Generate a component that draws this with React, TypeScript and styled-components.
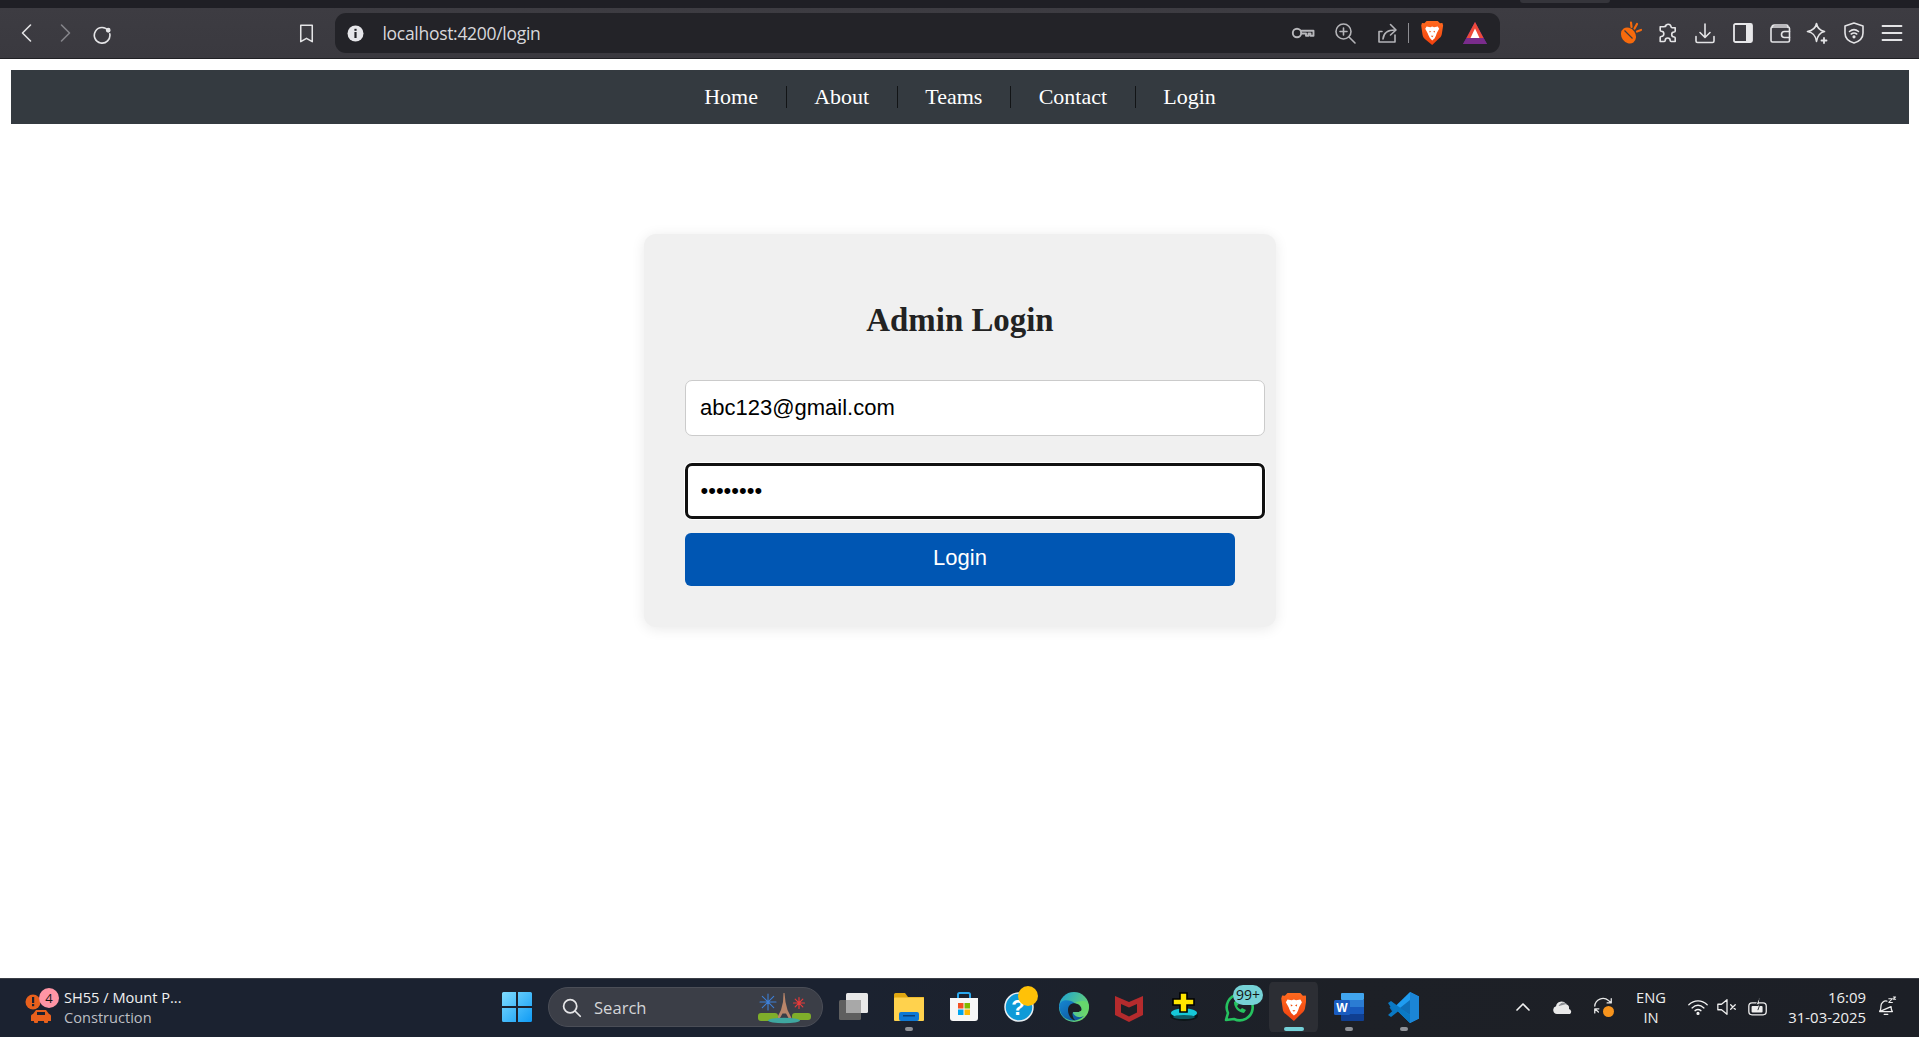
import React from "react";
import styled, { createGlobalStyle } from "styled-components";

const Global = createGlobalStyle`
  html, body { margin: 0; padding: 0; height: 100%; background: #fff; }
  #root { height: 100%; }
  * { box-sizing: border-box; }
`;

const Shell = styled.div`
  height: 1037px; display: flex; flex-direction: column; overflow: hidden;
`;
const TopStrip = styled.div`
  height: 8px; background: #1f1f25; flex: none; position: relative;
`;
const StripTab = styled.div`
  position: absolute; left: 1520px; top: 0; width: 90px; height: 3px;
  background: #35353b; border-radius: 0 0 6px 6px;
`;
const Toolbar = styled.header`
  height: 51px; flex: none; display: flex; align-items: center; padding: 0 0 0 8px;
  background: linear-gradient(180deg, #3d3c42 0%, #3a393f 100%);
  border-bottom: 1px solid #202024;
`;
const Slot = styled.span<{ $w: number; $ml?: number; $op?: number }>`
  flex: none; display: flex; align-items: center; justify-content: center; position: relative;
  width: ${(p) => p.$w}px; margin-left: ${(p) => p.$ml ?? 0}px; opacity: ${(p) => p.$op ?? 1};
`;
const AddressBar = styled.div`
  flex: none; width: 1165px; height: 40px; margin-left: 10px;
  display: flex; align-items: center; padding: 0 7.5px 0 12px;
  background: #232328; border-radius: 11px;
`;
const Url = styled.span`
  font-family: "Open Sans", sans-serif; font-size: 17.5px; letter-spacing: -0.3px; color: #d8d8dc;
  margin-left: 18.5px; flex: 1; white-space: nowrap; line-height: 22px; margin-top: -1px;
`;
const UrlDivider = styled.span`
  width: 1px; height: 20px; background: #8d8d92; flex: none;
`;
const RightTools = styled.div`
  display: flex; align-items: center; margin-left: 112px;
`;

const Page = styled.main`
  flex: 1; min-height: 0; background: #fff; padding: 11px 10px 0 11px; display: flex; flex-direction: column;
`;
const NavBar = styled.nav`
  height: 54px; flex: none; background: #343a40; display: flex; align-items: center; justify-content: center;
`;
const NavLink = styled.a<{ $last?: boolean }>`
  font-family: "Liberation Serif", serif; font-size: 22px; color: #fff; line-height: 22px;
  padding: 0 27.6px; text-decoration: none;
  border-right: ${(p) => (p.$last ? "none" : "1px solid #121416")};
  height: 22px; display: block;
`;
const Card = styled.section`
  width: 632px; height: 393px; margin: 110px auto 0; flex: none; background: #f0f0f0;
  border-radius: 12px; box-shadow: 0 2px 14px rgba(0, 0, 0, 0.09);
  padding: 0 10px 0 41px; display: flex; flex-direction: column; align-items: flex-start;
`;
const Title = styled.h2`
  width: 550px; margin: 66px 0 0; height: 40px; line-height: 40px; text-align: center;
  font-family: "Liberation Serif", serif; font-weight: 700; font-size: 32.9px; color: #222;
`;
const Field = styled.input<{ $focused?: boolean }>`
  width: 580px; height: 56px; margin: ${(p) => (p.$focused ? "27px" : "40px")} 0 0;
  padding: 0 ${(p) => (p.$focused ? 12.5 : 14)}px;
  font-family: "Liberation Sans", sans-serif; font-size: 22px; color: #000; background: #fff;
  border-radius: 7px; appearance: none; display: block;
  border: ${(p) => (p.$focused ? "3px solid #111" : "1px solid #cbcbcb")};
  box-shadow: ${(p) => (p.$focused ? "0 0 0 1px #fff" : "none")};
  outline: none;
`;
const LoginButton = styled.button`
  width: 550px; height: 53px; margin-top: 14px; border: none; border-radius: 6px; padding: 0 0 3px;
  background: #0056b3; color: #fff; font-family: "Liberation Sans", sans-serif; font-size: 22px;
`;

const Taskbar = styled.footer`
  height: 59px; flex: none; display: flex; align-items: center;
  background: linear-gradient(90deg, #1b2230 0%, #1b2230 45%, #1d2026 70%, #1c1f26 100%);
  border-top: 1px solid #3a3e46;
`;
const Weather = styled.div`
  width: 490px; flex: none; display: flex; align-items: center; padding-left: 24px;
`;
const WeatherIcon = styled.span`
  position: relative; width: 40px; height: 40px; flex: none; display: block;
`;
const Badge = styled.span<{ $bg: string; $l: number; $t: number; $w: number; $h: number; $fs: number }>`
  position: absolute; left: ${(p) => p.$l}px; top: ${(p) => p.$t}px; width: ${(p) => p.$w}px; height: ${(p) => p.$h}px;
  border-radius: 12px; background: ${(p) => p.$bg}; color: #151515; display: flex; align-items: center; justify-content: center;
  font-family: "Open Sans", sans-serif; font-size: ${(p) => p.$fs}px; line-height: 1;
`;
const WeatherText = styled.div`
  display: flex; flex-direction: column; font-family: "Open Sans", sans-serif; font-size: 14.6px; line-height: 20px;
  margin-top: -2px;
`;
const WeatherTitle = styled.span`color: #f1f1f1; white-space: nowrap;`;
const WeatherSub = styled.span`color: #bdbfc3;`;
const SearchBox = styled.div`
  width: 275px; height: 40px; flex: none; margin-left: 4px; margin-right: 3px; border-radius: 20px;
  background: #3b3e47; border: 1px solid #4b4e57; margin-top: -2px;
  display: flex; align-items: center; padding-left: 12px; position: relative;
`;
const SearchLabel = styled.span`
  font-family: "Open Sans", sans-serif; font-size: 16.6px; color: #d4d5d8; margin-left: 12px;
`;
const SearchArt = styled.span`
  position: absolute; right: 10px; top: 4px; display: block; height: 32px;
`;
const TaskSlot = styled.span<{ $active?: boolean }>`
  flex: none; width: 55px; height: 50px; display: flex; align-items: center; justify-content: center; position: relative;
  padding: 0 3px; margin-top: -2px; border-radius: 6px; background-clip: content-box;
  background-color: ${(p) => (p.$active ? "#2c2e34" : "transparent")};
`;
const RunDot = styled.span<{ $active?: boolean }>`
  position: absolute; bottom: 1px; left: 50%; transform: translateX(-50%); height: 4px; border-radius: 2px;
  width: ${(p) => (p.$active ? 20 : 8)}px; background: ${(p) => (p.$active ? "#74d1d8" : "#8e9197")};
`;
const Tray = styled.div`
  display: flex; align-items: center; margin-left: 72px; margin-top: -2px; font-family: "Open Sans", sans-serif; color: #eee;
`;
const Lang = styled.span`
  flex: none; width: 56px; text-align: center; font-size: 14.7px; line-height: 20px;
`;
const Clock = styled.span`
  flex: none; width: 91px; text-align: right; font-size: 14.9px; line-height: 20px; white-space: nowrap;
`;

const Stroke = { fill: "none", stroke: "currentColor", strokeLinecap: "round" as const, strokeLinejoin: "round" as const };

const Ico: React.FC<{ s?: number; w?: number; h?: number; vb?: string; c?: string; sw?: number; children: React.ReactNode }> = ({ s = 22, w, h, vb = "0 0 24 24", c = "#e4e4e6", sw = 1.6, children }) => (
  <svg width={w ?? s} height={h ?? s} viewBox={vb} style={{ color: c, display: "block" }} strokeWidth={sw} {...Stroke}>
    {children}
  </svg>
);

const BraveShield = ({ s = 24, id }: { s?: number; id: string }) => (
  <svg width={s * 0.86} height={s} viewBox="0 0 24 28" style={{ display: "block" }}>
    <defs>
      <linearGradient id={id} x1="0" y1="0" x2="0" y2="1"><stop offset="0" stopColor="#ff6a1f" /><stop offset="1" stopColor="#f0400e" /></linearGradient>
    </defs>
    <path d="M6 1h12l2.400 2.600 2.600-.4.800 2.800-1.400 9c-.3 2-1.200 3.400-2.800 4.600L12 27l-7.600-6.400C2.800 19.400 1.900 18 1.600 16L.2 6l.8-2.800 2.600.4z" fill={`url(#${id})`} />
    <path d="M6 7l4 .8L12 7l2 .8 4-.8 1.500 2.500-2.500 4.500-1 3-1.500 3L12 22l-2.500-2.500L8 16.500l-1-2.500L4.500 9.500z" fill="#fff" />
    <path d="M9 11.500l2 1.200-1.800.8zM15 11.500l-2 1.200 1.800.8zM10.500 17h3l-1.500 1.500z" fill="#f0500f" />
  </svg>
);

const Bat = () => (
  <svg width="24" height="22" viewBox="0 0 24 22" style={{ display: "block" }}>
    <path d="M12 0 L24 22 H0z" fill="#6b2a8e" />
    <path d="M12 0 L20.500 16 H3.500z" fill="#ee4a3a" />
    <path d="M12 6.500 L16.500 16 H7.500z" fill="#fff" />
    <path d="M3.500 16h17L24 22H0z" fill="#7a2c8c" />
  </svg>
);

export default function App() {
  return (
    <Shell>
      <Global />
      <TopStrip><StripTab /></TopStrip>
      <Toolbar>
        <Slot $w={38}><Ico s={24}><path d="M15.500 4l-8 8 8 8" /></Ico></Slot>
        <Slot $w={38}><Ico s={24} c="#85858a"><path d="M8.500 4l8 8-8 8" /></Ico></Slot>
        <Slot $w={36}><Ico s={22} sw={1.800}><path d="M19 9.500A8.500 8.500 0 1 0 20.500 13" /><circle cx="18.800" cy="9" r="1.700" fill="currentColor" /></Ico></Slot>
        <Slot $w={38} $ml={167}><Ico s={23}><path d="M6 3.500h12v17l-6-3.500-6 3.500z" /></Ico></Slot>
        <AddressBar>
          <svg width="17" height="17" viewBox="0 0 17 17" style={{ display: "block", flex: "none" }}>
            <circle cx="8.500" cy="8.500" r="8" fill="#e6e6ea" />
            <rect x="7.400" y="7" width="2.200" height="6" fill="#232328" />
            <rect x="7.400" y="3.800" width="2.200" height="2" fill="#232328" />
          </svg>
          <Url>localhost:4200/login</Url>
          <Slot $w={42}><Ico w={24} h={20} vb="0 0 24 20" c="#b8b8bc" sw={1.900}><circle cx="6" cy="10" r="4.200" /><path d="M10.500 7.800h12v5h-3v-2.300h-2v2.300h-2.500v-2.300h-4.500" /></Ico></Slot>
          <Slot $w={42}><Ico s={24} c="#b4b4b8"><circle cx="10.500" cy="10.500" r="7.500" /><path d="M16 16l6 6M10.500 7v7M7 10.500h7" /></Ico></Slot>
          <Slot $w={42}><Ico s={24} c="#b4b4b8"><path d="M20 14v7H4V10.500h3" /><path d="M8 18c.5-6 4-9 12-9" /><path d="M15.500 3.500L21 9l-5.500 5" /></Ico></Slot>
          <UrlDivider />
          <Slot $w={48}><BraveShield s={26} id="brvA" /></Slot>
          <Slot $w={36}><Bat /></Slot>
        </AddressBar>
        <RightTools>
          <Slot $w={37.300}>
            <svg width="24" height="24" viewBox="0 0 24 24" style={{ display: "block" }}>
              <ellipse cx="9.500" cy="14.500" rx="7" ry="8.500" transform="rotate(-35 9.500 14.500)" fill="#f76a0c" />
              <path d="M5.500 9.500l8 8" stroke="#3b3a40" strokeWidth="1.100" />
              <path d="M12 1.500l.5 4.500M18 3l-2.500 4.500M22 9l-4 1.500" stroke="#f76a0c" strokeWidth="2.200" strokeLinecap="round" />
            </svg>
          </Slot>
          <Slot $w={37.300}><Ico s={24}><path d="M9.500 5.500a2.800 2.800 0 0 1 5.500 0c0 .8 .5 1.200 1.200 1.200h3v3.300c0 .8 -.5 1 -1 1a2.500 2.500 0 0 0 0 5c.5 0 1 .2 1 1v3.500h-4c-.8 0 -1 -.5 -1 -1a2.500 2.500 0 0 0 -5 0c0 .5 -.2 1 -1 1h-4v-4c0 -.7 .5 -1 1 -1a2.600 2.600 0 0 0 0 -5.300c-.5 0 -1 -.3 -1 -1v-3.500h4c.8 0 1.300 -.4 1.300 -1.200z" /></Ico></Slot>
          <Slot $w={37.300}><Ico s={24}><path d="M12 3v13M7 11.500l5 5 5-5" /><path d="M3 15.500v4.500a1.500 1.500 0 0 0 1.500 1.500h15A1.500 1.500 0 0 0 21 20v-4.500" /></Ico></Slot>
          <Slot $w={37.300}>
            <svg width="20" height="20" viewBox="0 0 20 20" style={{ display: "block" }}>
              <rect x="1" y="1" width="18" height="18" rx="1.500" fill="none" stroke="#e8e8ea" strokeWidth="1.800" />
              <rect x="13" y="1" width="6" height="18" fill="#e8e8ea" />
            </svg>
          </Slot>
          <Slot $w={37.300}><Ico s={24}><path d="M4 6.500c0-1.500 1-2.500 2.500-2.500h12c1 0 1.500 .6 1.500 1.500v1" /><rect x="3" y="6" width="18.500" height="15" rx="1.500" /><path d="M21.500 10.500h-5a2.800 2.800 0 0 0 0 6h5" /></Ico></Slot>
          <Slot $w={37.300}><Ico s={24}><path d="M11.500 2.500c.8 4.500 3.200 7 8 8-4.500 1-7 3.500-8 10-1-6.500-3.500-9-9-10 5.500-1 8.200-3.500 9-8z" /><path d="M19 17v5M16.500 19.500h5" strokeWidth="1.800" /></Ico></Slot>
          <Slot $w={37.300}><Ico s={24}><path d="M12 2l9 3v7c0 5-4 8.500-9 10-5-1.500-9-5-9-10V5z" /><path d="M7.500 10.500c2.700-2.300 6.300-2.300 9 0M9.300 13c1.700-1.200 3.700-1.200 5.400 0" /><circle cx="12" cy="15.800" r=".8" fill="currentColor" /></Ico></Slot>
          <Slot $w={37.300}><Ico s={24} sw={1.800}><path d="M2.500 5h19M2.500 12h19M2.500 19h19" /></Ico></Slot>
        </RightTools>
      </Toolbar>

      <Page>
        <NavBar>
          <NavLink>Home</NavLink>
          <NavLink>About</NavLink>
          <NavLink>Teams</NavLink>
          <NavLink>Contact</NavLink>
          <NavLink $last>Login</NavLink>
        </NavBar>
        <Card>
          <Title>Admin Login</Title>
          <Field type="email" readOnly value="abc123@gmail.com" />
          <Field $focused type="password" readOnly value="12345678" />
          <LoginButton>Login</LoginButton>
        </Card>
      </Page>

      <Taskbar>
        <Weather>
          <WeatherIcon>
            <svg width="32" height="40" viewBox="0 0 32 40" style={{ display: "block" }}>
              <circle cx="9" cy="14" r="7.500" fill="#e8601c" />
              <rect x="8" y="9" width="2.200" height="6" fill="#1b2230" />
              <rect x="8" y="16" width="2.200" height="2.200" fill="#1b2230" />
              <path d="M7 33v-5c0-1 1-2 2-2l3-4h10l3 4c1 0 2 1 2 2v5z" fill="#e8601c" />
              <rect x="13" y="24" width="8" height="3" fill="#1b2230" />
              <rect x="10" y="32" width="4" height="3" rx="1" fill="#e8601c" />
              <rect x="20" y="32" width="4" height="3" rx="1" fill="#e8601c" />
            </svg>
            <Badge $bg="#ff95a5" $l={15} $t={0} $w={20} $h={20} $fs={13}>4</Badge>
          </WeatherIcon>
          <WeatherText>
            <WeatherTitle>SH55 / Mount P...</WeatherTitle>
            <WeatherSub>Construction</WeatherSub>
          </WeatherText>
        </Weather>
        <Slot $w={54}>
          <svg width="30" height="30" viewBox="0 0 30 30" style={{ display: "block", marginTop: -2 }}>
            <defs>
              <linearGradient id="win" x1="0" y1="0" x2="1" y2="1"><stop offset="0" stopColor="#7fdcff" /><stop offset="1" stopColor="#0f9bf5" /></linearGradient>
            </defs>
            <path d="M1.500 0H14V14H0V1.500A1.500 1.500 0 0 1 1.500 0zM16 0h12.500A1.500 1.500 0 0 1 30 1.500V14H16zM0 16h14v14H1.500A1.500 1.500 0 0 1 0 28.500zM16 16h14v12.500a1.500 1.500 0 0 1-1.500 1.500H16z" fill="url(#win)" />
          </svg>
        </Slot>
        <SearchBox>
          <Ico s={21} c="#e6e6e8" sw={2}><circle cx="10.500" cy="10.500" r="7.500" /><path d="M16 16l6 6" /></Ico>
          <SearchLabel>Search</SearchLabel>
          <SearchArt>
            <svg width="54" height="32" viewBox="0 0 54 32" style={{ display: "block" }}>
              <g stroke="#3d7fd6" strokeWidth="1.100" strokeLinecap="round">
                <path d="M10 2v16M2 10h16M4.300 4.300l11.400 11.400M15.700 4.300L4.300 15.700" />
              </g>
              <g stroke="#e83a3a" strokeWidth="1.200" strokeLinecap="round">
                <path d="M41 5.500v11M35.500 11h11M37.200 7.200l7.600 7.600M44.800 7.200l-7.600 7.600" />
              </g>
              <path d="M25.500 1h1l1 9 2 8 4 8h-3l-2.500-4.500h-3.500L22 26h-3l4-8 2-8z" fill="#b8856a" />
              <rect x="0" y="21" width="20" height="8" rx="3" fill="#7fae2a" />
              <rect x="34" y="21" width="19" height="7" rx="3" fill="#7fae2a" />
              <ellipse cx="26" cy="28.500" rx="16" ry="2.800" fill="#3fa7a0" />
            </svg>
          </SearchArt>
        </SearchBox>
        <TaskSlot>
          <svg width="30" height="30" viewBox="0 0 30 30" style={{ display: "block" }}>
            <rect x="0" y="8" width="22" height="20" rx="1.500" fill="#5f5f5f" />
            <rect x="7" y="1" width="22" height="20" rx="1.500" fill="#e9e9e9" />
            <rect x="7" y="8" width="15" height="13" fill="#a8a8a8" />
          </svg>
        </TaskSlot>
        <TaskSlot>
          <svg width="30" height="28" viewBox="0 0 30 28" style={{ display: "block" }}>
            <path d="M0 1.500A1.500 1.500 0 0 1 1.500 0H11l3 4h16v6H0z" fill="#e0a711" />
            <rect x="0" y="4.500" width="30" height="23.500" rx="1" fill="#ffd24d" />
            <rect x="5" y="19" width="20" height="9" rx="2" fill="#0f78d4" />
            <rect x="9" y="22" width="12" height="1.500" fill="#0b3f78" />
          </svg>
          <RunDot />
        </TaskSlot>
        <TaskSlot>
          <svg width="30" height="30" viewBox="0 0 30 30" style={{ display: "block" }}>
            <path d="M9 6V2.500A1.500 1.500 0 0 1 10.500 1h9A1.500 1.500 0 0 1 21 2.500V6" fill="none" stroke="#2aa8ee" strokeWidth="2" />
            <path d="M1 6h28v20a3 3 0 0 1-3 3H4a3 3 0 0 1-3-3z" fill="#f7f7f7" />
            <rect x="9" y="11" width="5.500" height="5.500" fill="#f25022" />
            <rect x="15.500" y="11" width="5.500" height="5.500" fill="#7fba00" />
            <rect x="9" y="17.500" width="5.500" height="5.500" fill="#00a4ef" />
            <rect x="15.500" y="17.500" width="5.500" height="5.500" fill="#ffb900" />
          </svg>
        </TaskSlot>
        <TaskSlot>
          <svg width="30" height="30" viewBox="0 0 30 30" style={{ display: "block" }}>
            <circle cx="15" cy="15" r="14" fill="#0e9ad7" stroke="#e8eef2" strokeWidth="1.500" />
            <text x="14" y="23" textAnchor="middle" fontFamily="Liberation Sans, sans-serif" fontWeight="700" fontSize="22" fill="#fff">?</text>
          </svg>
          <Badge $bg="#ffc107" $l={27} $t={4} $w={20} $h={20} $fs={1} />
        </TaskSlot>
        <TaskSlot>
          <svg width="30" height="30" viewBox="0 0 30 30" style={{ display: "block" }}>
            <defs>
              <linearGradient id="edgeA" x1="0" y1="0" x2="1" y2=".6"><stop offset="0" stopColor="#1aa0d8" /><stop offset="1" stopColor="#6fd86a" /></linearGradient>
              <linearGradient id="edgeB" x1="0" y1="0" x2="1" y2="1"><stop offset="0" stopColor="#1688d4" /><stop offset="1" stopColor="#0c4d90" /></linearGradient>
            </defs>
            <circle cx="15" cy="15" r="15" fill="url(#edgeA)" />
            <path d="M0 15C1 7 8 8 12 9c5 1.500 7 6 3 8-3.500 1.500-.5 7 4.500 8 2 .4 4-.2 5.500-1.200-7 8-24 6-24.500-8.800z" fill="url(#edgeB)" />
            <path d="M9 18c0-5 4-7.500 8-6.500 4 1 5.500 4 5.500 6 0 2-2 2.500-4 2.500h-4c-2 1-1 6 2 8.500C12 28 9 23 9 18z" fill="#1b1e25" />
            <path d="M30 15c0 3-3 5.500-7 5.500-2 0-3-.8-3-1 2 .2 3.500-.8 3.300-2.500C23 14 20 11 16 11 21 8 30 8 30 15z" fill="#66d66c" />
          </svg>
        </TaskSlot>
        <TaskSlot>
          <svg width="28" height="30" viewBox="0 0 28 30" style={{ display: "block" }}>
            <path d="M0 4l14 6 14-6v19L14 30 0 23z" fill="#b52b2d" />
            <path d="M6 12l8 3.500L22 12v8.500l-8 4-8-4z" fill="#1d2026" />
          </svg>
        </TaskSlot>
        <TaskSlot>
          <svg width="30" height="30" viewBox="0 0 30 30" style={{ display: "block" }}>
            <ellipse cx="15" cy="24" rx="14" ry="5" fill="#0d1518" />
            <ellipse cx="15" cy="21" rx="13" ry="4.500" fill="#16c8d8" />
            <ellipse cx="15" cy="25" rx="11" ry="2" fill="#0d5c66" />
            <path d="M11 1h7v6h7v6h-7v7h-7v-7H4V7h7z" fill="#ffe600" stroke="#000" strokeWidth="1.600" />
          </svg>
        </TaskSlot>
        <TaskSlot>
          <svg width="32" height="32" viewBox="0 0 32 32" style={{ display: "block" }}>
            <path d="M3 29l2-7A13 13 0 1 1 11 28z" fill="none" stroke="#25c25f" strokeWidth="2.600" strokeLinejoin="round" />
            <path d="M11 11c0 6 4 10 10 11l2-3-4-2-1.500 1.500c-1.500-.8-2.800-2-3.500-3.500L15.500 13.500 13.500 9.500z" fill="#25c25f" />
          </svg>
          <Badge $bg="#76d2d6" $l={22} $t={3} $w={30} $h={20} $fs={14}>99+</Badge>
        </TaskSlot>
        <TaskSlot $active>
          <BraveShield s={30} id="brvB" />
          <RunDot $active />
        </TaskSlot>
        <TaskSlot>
          <svg width="30" height="28" viewBox="0 0 30 28" style={{ display: "block" }}>
            <rect x="7" y="0" width="23" height="7" rx="1" fill="#41a5ee" />
            <rect x="7" y="7" width="23" height="7" fill="#2b7cd3" />
            <rect x="7" y="14" width="23" height="7" fill="#185abd" />
            <rect x="7" y="21" width="23" height="7" rx="1" fill="#103f91" />
            <rect x="0" y="7" width="16" height="15" rx="1.500" fill="#1a5cc0" />
            <text x="8" y="19" textAnchor="middle" fontFamily="Liberation Sans, sans-serif" fontWeight="700" fontSize="12" fill="#fff">W</text>
          </svg>
          <RunDot />
        </TaskSlot>
        <TaskSlot>
          <svg width="31" height="31" viewBox="0 0 31 31" style={{ display: "block" }}>
            <path d="M22 0l9 4.500v22L22 31 6 15.500z" fill="#1f9cf0" />
            <path d="M22 0v31l9-4.500v-22z" fill="#1b85d6" />
            <path d="M22 8L10 17.500 4.500 13 1.500 15.500 4.500 20l6-4.500L22 23z" fill="#0f6fb8" />
            <path d="M0 11l3-2 19 14v8l-12-11.500-7 5.500-3-2 5-4.500z" fill="#0a79c4" />
          </svg>
          <RunDot />
        </TaskSlot>
        <Tray>
          <Slot $w={40}><Ico s={18} c="#f0f0f0" sw={2.200}><path d="M4 16l8-8 8 8" /></Ico></Slot>
          <Slot $w={40}>
            <svg width="20" height="14" viewBox="0 0 20 14" style={{ display: "block" }}>
              <path d="M4 14a4 4 0 0 1-1-7.800A5.500 5.500 0 0 1 13 4a4.500 4.500 0 0 1 3 5 2.800 2.800 0 0 1 1 5z" fill="#e8e8e8" />
              <path d="M6 6a5 5 0 0 1 7.500-2" fill="#8a8d92" stroke="#8a8d92" />
            </svg>
          </Slot>
          <Slot $w={40}>
            <Ico s={22} c="#e8e8e8" sw={1.400}><path d="M3 11a9 9 0 0 1 15-6l3 2.500M21 3v4.500h-4.500" /><path d="M3 14l4 3.500M3 18.500V14h4.500" /></Ico>
            <Badge $bg="#f7941d" $l={20} $t={10} $w={11} $h={11} $fs={1} />
          </Slot>
          <Lang>ENG<br />IN</Lang>
          <Slot $w={30} $ml={4}><Ico s={22} c="#f2f2f2" sw={1.500}><path d="M2 9.500c6-5.500 14-5.500 20 0M5.500 13c4-3.500 9-3.500 13 0M8.800 16c2-1.500 4.400-1.500 6.400 0" /><circle cx="12" cy="19" r="1" fill="currentColor" /></Ico></Slot>
          <Slot $w={28}><Ico s={22} c="#eee" sw={1.400}><path d="M2 9h4l6-5v16l-6-5H2z" /><path d="M16 9.500l5 5M21 9.500l-5 5" /></Ico></Slot>
          <Slot $w={34}><Ico s={22} c="#eee" sw={1.400}><rect x="2" y="7.500" width="19" height="13" rx="3.500" /><rect x="5" y="11" width="12" height="7" rx="1" fill="currentColor" stroke="none" /><path d="M13.500 1.500L10 9.500h4l-2 5.500" stroke="#1d2026" strokeWidth="1" fill="#eee" /></Ico></Slot>
          <Clock>16:09<br />31-03-2025</Clock>
          <Slot $w={40}><Ico s={22} c="#eee" sw={1.400}><path d="M5 17c1.500-1.500 1.500-3 1.500-6A5.500 5.500 0 0 1 13 5.500M17.500 11.500c0 2.500.3 4 1.500 5.500H5zM10 20h4" /><path d="M15 3h4l-4 4h4M20 1h2.500L20 3.500h2.500" strokeWidth="1.100" /></Ico></Slot>
        </Tray>
      </Taskbar>
    </Shell>
  );
}
